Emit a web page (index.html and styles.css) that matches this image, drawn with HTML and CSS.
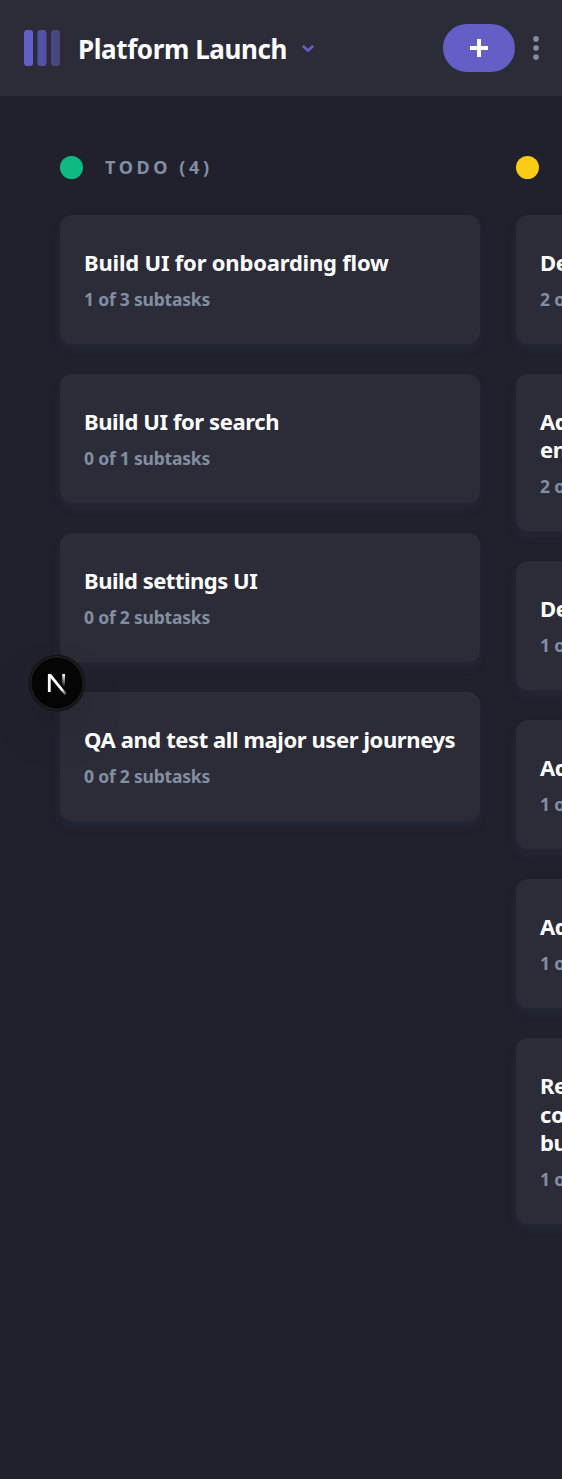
FILE: index.html
```html
<!DOCTYPE html>
<html lang="en">
<head>
<meta charset="utf-8">
<title>Platform Launch</title>
<link rel="stylesheet" href="styles.css">
</head>
<body>
<header class="topbar">
  <svg class="logo" width="36" height="36" viewBox="0 0 36 36" fill="#635fc7">
    <rect width="9" height="36" rx="3"/>
    <rect x="13.5" width="9" height="36" rx="3" opacity=".75"/>
    <rect x="27" width="9" height="36" rx="3" opacity=".5"/>
  </svg>
  <h1 class="board-name">Platform Launch</h1>
  <svg class="chevron" width="14" height="10" viewBox="0 0 14 10" fill="none" stroke="#635fc7" stroke-width="2.7"><path d="M1.8 1.8 7 6.7l5.2-4.9"/></svg>
  <button class="add" aria-label="Add task"><svg width="18" height="18" viewBox="0 0 18 18" fill="#fff"><path d="M7 0h4v7h7v4h-7v7H7v-7H0V7h7z"/></svg></button>
  <svg class="more" width="6" height="24" viewBox="0 0 6 24" fill="#828fa3"><circle cx="3" cy="2.9" r="2.8"/><circle cx="3" cy="12" r="2.8"/><circle cx="3" cy="21.1" r="2.8"/></svg>
</header>
<main class="board">
  <section class="column">
    <h2 class="column-head"><i class="dot green"></i><span>TODO (4)</span></h2>
    <article class="card"><h3 class="open">Build UI for onboarding flow</h3><p>1 of 3 subtasks</p></article>
    <article class="card"><h3>Build UI for search</h3><p>0 of 1 subtasks</p></article>
    <article class="card"><h3 class="tight">Build settings UI</h3><p>0 of 2 subtasks</p></article>
    <article class="card"><h3>QA and test all major user journeys</h3><p>0 of 2 subtasks</p></article>
  </section>
  <section class="column">
    <h2 class="column-head"><i class="dot yellow"></i><span>DOING (6)</span></h2>
    <article class="card"><h3>Design settings and search pages</h3><p>2 of 3 subtasks</p></article>
    <article class="card"><h3>Add account management<br>endpoints</h3><p>2 of 3 subtasks</p></article>
    <article class="card"><h3>Design onboarding flow</h3><p>1 of 3 subtasks</p></article>
    <article class="card"><h3>Add search endpoints</h3><p>1 of 2 subtasks</p></article>
    <article class="card"><h3>Add authentication endpoints</h3><p>1 of 2 subtasks</p></article>
    <article class="card"><h3>Research pricing points of various<br>competitors and trial different<br>business models</h3><p>1 of 3 subtasks</p></article>
  </section>
</main>
<div class="dev-badge">
  <svg width="54" height="54" viewBox="0 0 54 54" fill="none">
    <defs>
      <linearGradient id="diag" x1="32" y1="33" x2="38" y2="40" gradientUnits="userSpaceOnUse"><stop stop-color="#fff"/><stop offset="1" stop-color="#fff" stop-opacity="0"/></linearGradient>
      <linearGradient id="stem" x1="36" y1="18" x2="36" y2="31" gradientUnits="userSpaceOnUse"><stop stop-color="#fff"/><stop offset="1" stop-color="#fff" stop-opacity="0"/></linearGradient>
    </defs>
    <path d="M19.3 36V18.3" stroke="#fff" stroke-width="2.8"/>
    <path d="M18 18h3.1l15.5 19.4-2 1.6L18 19z" fill="url(#diag)"/>
    <path d="M33.6 18v13" stroke="url(#stem)" stroke-width="2.8"/>
  </svg>
</div>
</body>
</html>
```
FILE: styles.css
```css
* { box-sizing: border-box; margin: 0; padding: 0; }
html, body { height: 100%; overflow: hidden; }
body {
  background: #21212d;
  color: #fff;
  font-family: "Noto Sans", "Open Sans", sans-serif;
  font-weight: 700;
}
.topbar {
  display: flex;
  align-items: center;
  height: 96px;
  padding: 0 23px 0 24px;
  background: #2c2c38;
}
.board-name { margin-left: 18px; padding-top: 2px; font-size: 26px; line-height: 34px; letter-spacing: -.4px; white-space: nowrap; }
.chevron { margin-left: 14px; margin-top: 2px; }
.add {
  display: flex;
  align-items: center;
  justify-content: center;
  width: 72px;
  height: 48px;
  margin-left: auto;
  border: 0;
  border-radius: 24px;
  background: #635fc7;
}
.more { margin-left: 18px; }
.board { display: flex; gap: 36px; width: 100%; padding: 54px 60px; overflow: hidden; }
.column { display: flex; flex: none; flex-direction: column; gap: 30px; width: 420px; }
.column-head {
  display: flex;
  align-items: center;
  gap: 22px;
  height: 35px;
  color: #828fa3;
  font-size: 18px;
  letter-spacing: 3.6px;
  white-space: nowrap;
}
.column-head span { padding-bottom: 2px; }
.dot { width: 23px; height: 23px; border-radius: 50%; }
.green { background: #10b981; }
.yellow { background: #facc15; }
.card {
  padding: 33px 24px 32.75px;
  border-radius: 12px;
  background: #2c2c38;
  box-shadow: 0 6px 9px rgba(54, 78, 126, .13);
}
.card h3 { font-size: 22px; line-height: 28.25px; letter-spacing: -.41px; white-space: nowrap; }
.card h3.open { letter-spacing: -.2px; }
.card h3.tight { letter-spacing: -.5px; }
.card p { margin-top: 10.5px; color: #828fa3; font-size: 17.5px; line-height: 24.5px; letter-spacing: -.2px; }
.dev-badge {
  position: fixed;
  left: 30px;
  top: 656px;
  width: 54px;
  height: 54px;
  border-radius: 50%;
  background: #050506;
  box-shadow: inset 0 0 0 1.5px #202020, 0 0 0 1.5px #151517, 0 22px 54px -4px rgba(0, 0, 0, .14);
}
.dev-badge svg { display: block; }
```
